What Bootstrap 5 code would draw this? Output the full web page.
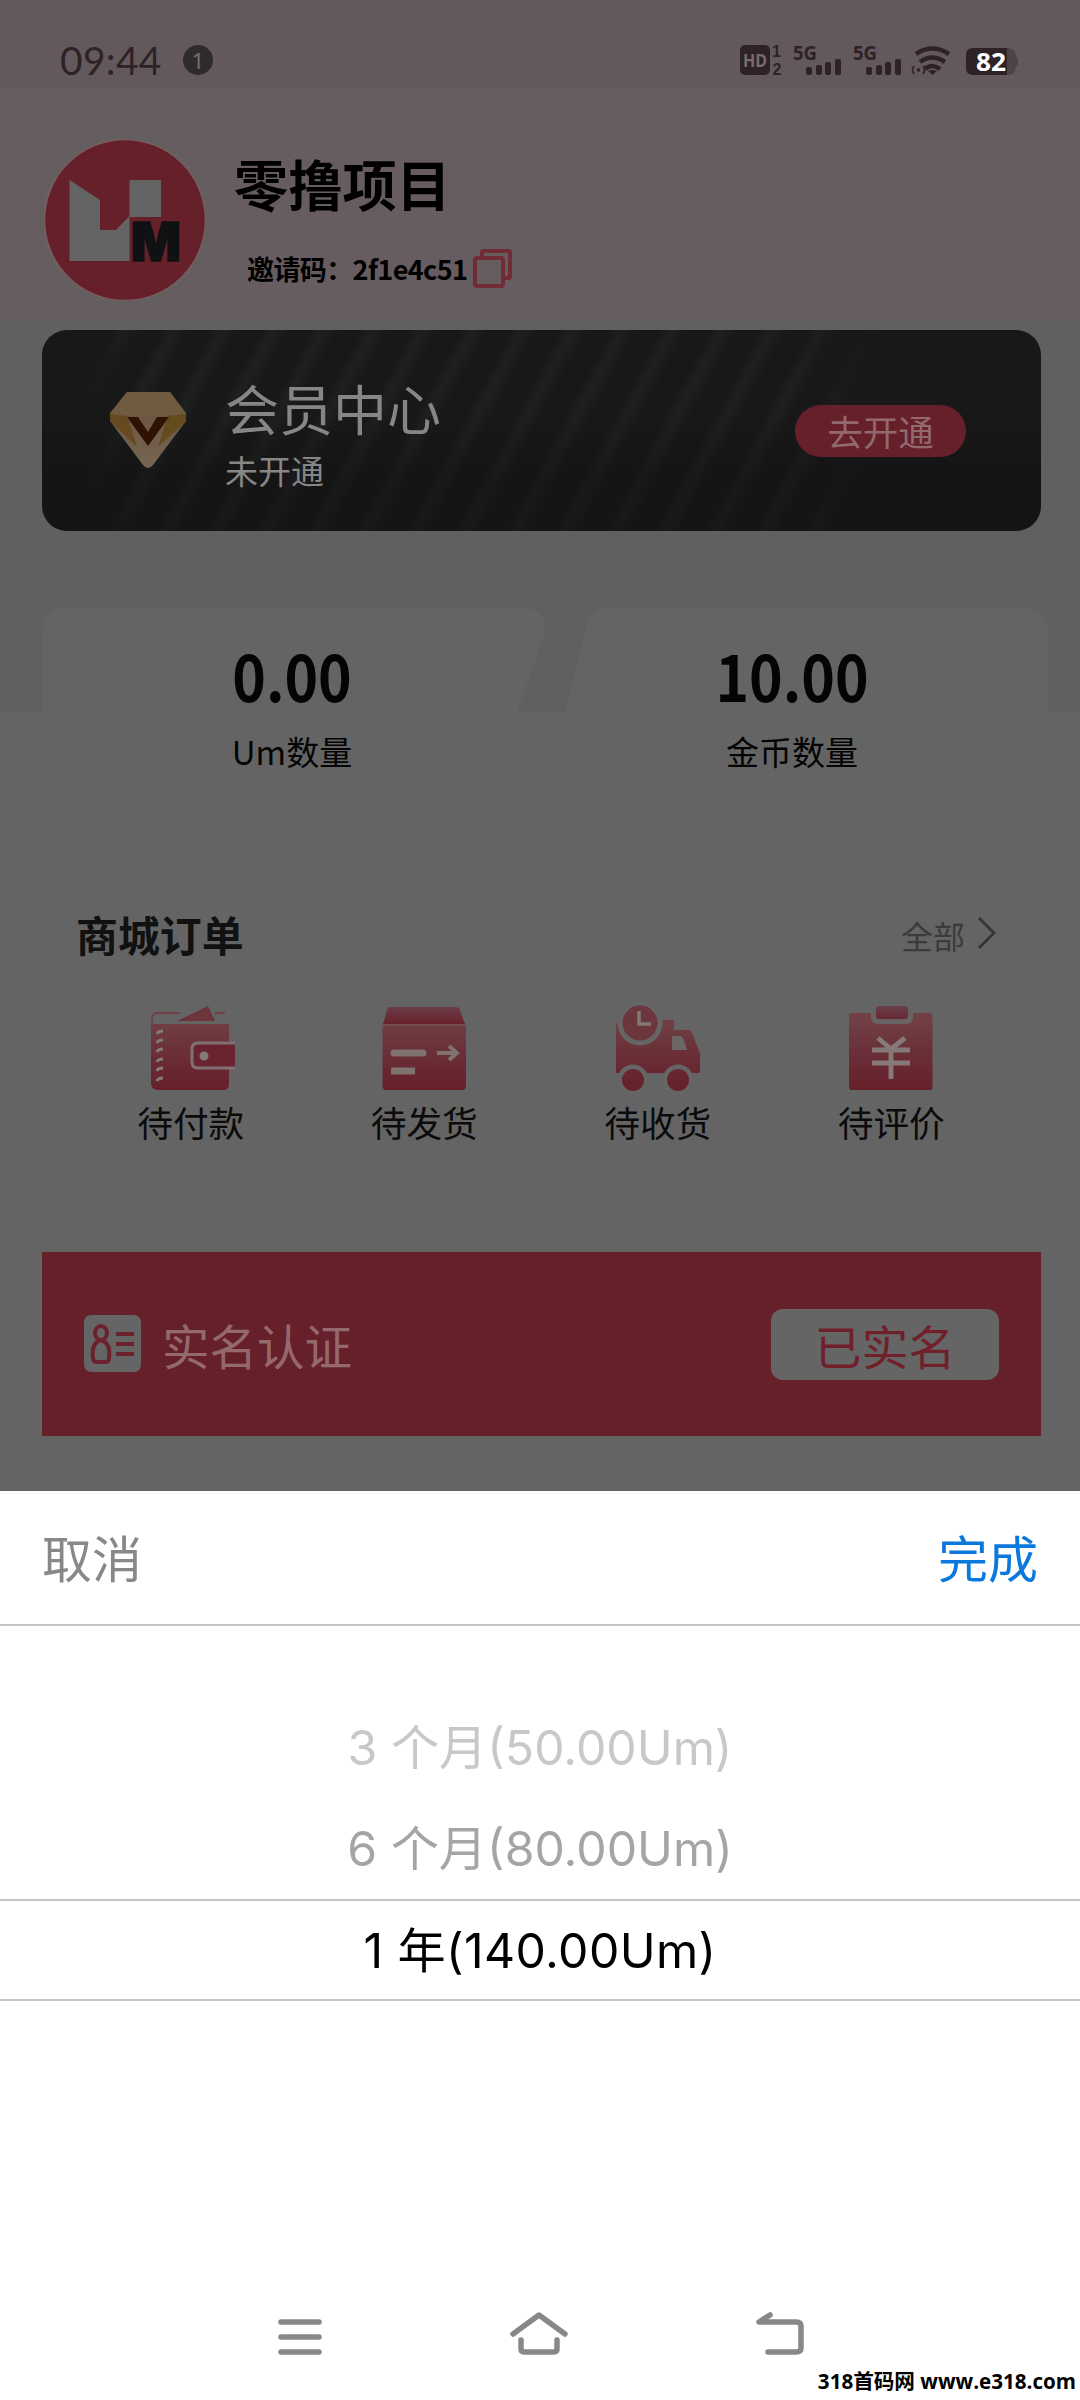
<!DOCTYPE html>
<html lang="zh-CN">
<head>
<meta charset="utf-8">
<meta name="viewport" content="width=1080">
<title>会员中心</title>
<link rel="stylesheet" href="https://cdn.jsdelivr.net/npm/bootstrap@5.3.0/dist/css/bootstrap.min.css">
<style>
body{margin:0;background:#fff;font-family:"Noto Sans CJK SC","Noto Sans",sans-serif}
svg{display:block;flex:none}
.phone{width:1080px;height:2400px;overflow:hidden;background:#fff}
.dimmed{height:1491px;background:linear-gradient(#606060 0 712px,#646464 712px)}
.status{height:88px;background:#63595d;padding:0 61px 0 60px;color:#2f2226}
.clock{font:39px/56px Lato,sans-serif;letter-spacing:.3px;padding-top:32px;width:123px}
.count{width:30px;height:30px;margin-top:45px;background:#2f2a2c;color:#766d70;font:22px/30px "Noto Sans",sans-serif}
.profile{height:232px;background:#675c60;padding:50px 43px 0}
.avatar{border-radius:50%;box-shadow:0 0 12px 3px #626060}
.nick{font-size:54.2px;line-height:60px;margin:15px 0 0 27px}
.invite{font-size:27px;line-height:40px;margin:36px 0 0 40px;height:40px}
.invite span{letter-spacing:-.6px;width:224px;white-space:nowrap}
.vip{height:201px;margin:10px 39px 0 42px;border-radius:25px;padding:0 75px 0 67px;color:#868686;
 background:linear-gradient(transparent 40%,rgba(14,14,14,.35) 72%),linear-gradient(90deg,#181818 0 4%,transparent 10% 75%,#181818 84%),repeating-linear-gradient(118deg,#181818 0 18px,#1e1f1f 27px 29px,#181818 42px 44px)}
.vip-name{font-size:54px;line-height:60px;margin-top:48px}
.vip-state{font-size:33px;line-height:40px;margin-top:12px}
.open-btn{width:171px;height:52px;border-radius:26px;background:#66202a;color:#92696e;font-size:35.5px;line-height:50px;margin-top:75px;padding:0;border:0}
.stats{height:170px;margin-top:77px;position:relative;color:#040404}
.stats>svg{position:absolute;left:0;top:0}
.stat{position:relative;text-align:center;width:500px}
.num{font-size:63px;line-height:76px;padding-top:29px;font-weight:700;transform:scaleX(.905)}
.cap{font-size:33px;line-height:40px;margin-top:18px}
.orders-head{height:60px;margin:125px 83px 0 76px;color:#111}
.orders-head b{font-size:41.9px;line-height:62px}
.all{font-size:32px;line-height:60px;color:#3b3b3b;padding-top:2px}
.orders{margin:37px 72px 0 74px;height:152px}
.order{font-size:35.7px;line-height:44px;color:#0b0b0b}
.realname{height:184px;margin:100px 39px 0 42px;background:#66202a;padding:0 42px 0 42px}
.realname .t{font-size:47.5px;line-height:60px;color:#94696e;margin-left:20px;padding-top:2px}
.done{width:228px;height:71px;border-radius:12px;background:#656565;color:#70202b;font-size:47px;line-height:71px}
.sheet-head{height:135px;border-bottom:2px solid #c6c6c6;padding:0 42px;font-size:50px}
.sheet-head a{text-decoration:none;line-height:131px;cursor:pointer}
.cancel{color:#888}.ok{color:#0a78dc}
.wheel{height:612px;padding-top:71px;font:48.2px Inter,"Noto Sans CJK SC",sans-serif;text-align:center}
.wheel div{height:101px;line-height:102px}
.w1{color:#c8c8c8}.w2{color:#a5a5a5}
.wheel .picked{height:102px;line-height:100px;color:#000;letter-spacing:.4px;border-top:2px solid #c6c6c6;border-bottom:2px solid #c6c6c6}
.keys{height:162px;position:relative;padding-top:68px;gap:188px;padding-left:278px}
.site{position:absolute;right:4px;top:126px;font:bold 20.6px/34px "Open Sans","Noto Sans CJK SC",sans-serif;color:#000;white-space:nowrap}
</style>
</head>
<body>
<div class="phone">
 <div class="dimmed">
  <div class="status d-flex">
   <div class="clock">09:44</div>
   <div class="count rounded-circle text-center">1</div>
   <svg class="ms-auto" width="280" height="88" viewBox="740 0 280 88" fill="#2f2226" font-family="Noto Sans, sans-serif" font-weight="700">
    <rect x="741" y="45" width="30" height="30" rx="5"/>
    <text x="744" y="67" font-size="18" textLength="24" lengthAdjust="spacingAndGlyphs" fill="#766b6f">HD</text>
    <g font-family="Liberation Sans, sans-serif" font-size="16"><text x="773" y="57">1</text><text x="773.500" y="75">2</text></g>
    <g id="sim"><text x="794" y="60" font-size="20" textLength="24" lengthAdjust="spacingAndGlyphs">5G</text>
    <rect x="807" y="67" width="6" height="8" rx="2"/><rect x="817" y="65" width="6" height="10" rx="2"/><rect x="826" y="62" width="6" height="13" rx="2"/><rect x="836" y="59" width="6" height="16" rx="2"/></g>
    <use href="#sim" x="60"/>
    <g fill="none" stroke="#2f2226" stroke-width="4.600"><path d="M917 54Q933 43 950 54M921 62Q933 53 946 62M926 69Q933 63 941 69"/><path stroke-width="1.600" d="M915 66q-3 4 0 8M924 66q3 4 0 8"/></g>
    <circle cx="919.500" cy="70" r="1.800"/><path d="M929 71q4-2 9 0l-4.500 4z"/>
    <path d="M1008 48h2q6 1 7 8l2 3v5l-2 3q-1 7-7 8h-4z" fill="#4b4346"/>
    <path d="M974 48h34v27h-34q-7 0-7-7V55q0-7 7-7z"/>
    <text x="977" y="71" font-size="25" textLength="30" lengthAdjust="spacingAndGlyphs" fill="#fff">82</text>
   </svg>
  </div>
  <div class="profile d-flex">
   <svg class="avatar" width="164" height="164" viewBox="43 138 164 164">
    <circle cx="125" cy="220" r="80.500" fill="#66202a" stroke="#765f62" stroke-width="1.500"/>
    <path d="M69.500 180L100 200v30h16l13.500-14v-36H161v37h-31.500v44h-60z" fill="#646464"/>
    <text x="131" y="261" font-family="Inter, sans-serif" font-weight="900" font-size="53" textLength="50" lengthAdjust="spacingAndGlyphs" fill="#101112" stroke="#101112" stroke-width="1.500">M</text>
   </svg>
   <div>
    <div class="nick fw-bold text-black">零撸项目</div>
    <div class="invite fw-bold text-black d-flex"><span>邀请码：2f1e4c51</span>
     <svg width="42" height="42" viewBox="470 249 42 42" fill="none" stroke="#702c35" stroke-width="4"><path d="M481 258v-6q0-1 1-1h26q1 0 1 1v25q0 1-1 1h-6"/><rect x="474" y="258" width="28" height="28" rx="2"/></svg>
    </div>
   </div>
  </div>
  <div class="vip d-flex">
   <svg width="78" height="78" viewBox="0 0 78 78" style="margin-top:61px">
    <defs><linearGradient id="gem" x2="0" y2="1"><stop stop-color="#675039"/><stop offset="1" stop-color="#766653"/></linearGradient></defs>
    <path d="M18 1h43l16 21v8L44 74q-5 6-10 0L1 30v-8z" fill="url(#gem)"/>
    <path d="M18 1L1 23l17 2h41l18-2L61 1z" fill="#6f5b3f"/><path d="M1 23l17 2 10 31L1 30z" fill="#66491f"/><path d="M77 23l-18 2-10 31 28-26z" fill="#644b1d"/>
    <path d="M18 26h11l10 15 9-15h12L39 55z" fill="#2e1203"/>
   </svg>
   <div style="margin-left:38px"><div class="vip-name">会员中心</div><div class="vip-state">未开通</div></div>
   <button class="open-btn ms-auto">去开通</button>
  </div>
  <div class="stats d-flex">
   <svg width="1080" height="110" fill="#646464"><path d="M42 104V30Q42 0 66 0H522Q550 0 543 30L517 104zM565 104L586 20Q591 0 610 0H1020Q1048 0 1048 28V104z"/></svg>
   <div class="stat" style="margin-left:42px"><div class="num">0.00</div><div class="cap">Um数量</div></div>
   <div class="stat"><div class="num">10.00</div><div class="cap">金币数量</div></div>
  </div>
  <div class="orders-head d-flex justify-content-between">
   <b>商城订单</b>
   <div class="all d-flex">全部<svg width="20" height="34" viewBox="0 0 20 34" fill="none" stroke="#343434" stroke-width="2.800" style="margin:11px 0 0 12px"><path d="M2 2l15 15L2 32"/></svg></div>
  </div>
  <svg width="0" height="0" class="position-absolute"><defs>
   <linearGradient id="red" gradientUnits="userSpaceOnUse" x1="0" y1="20" x2="0" y2="90"><stop stop-color="#704045"/><stop offset=".5" stop-color="#6a2e36"/><stop offset="1" stop-color="#66202a"/></linearGradient>
   <linearGradient id="cap" gradientUnits="userSpaceOnUse" x1="0" y1="5" x2="0" y2="24"><stop stop-color="#68404a"/><stop offset="1" stop-color="#69212c"/></linearGradient>
  </defs></svg>
  <div class="orders row g-0">
   <div class="order col d-flex flex-column align-items-center">
    <svg width="100" height="100" fill="url(#red)"><path d="M10 24h78v60q0 6-6 6H17q-7 0-7-7z"/><path d="M36 21L67 6l7 15z" fill="#6d343b"/><path d="M11 24v-5q0-6 6-6h22M74 13h10" fill="none" stroke="#733f45" stroke-width="1.800"/><path d="M94 43H57q-6 0-6 6v13q0 6 6 6h37" fill="#69242f" stroke="#817173" stroke-width="3"/><circle cx="63" cy="56" r="4.500" fill="#85797a"/><path d="M16 34q1-3 6-3M16 43q1-3 6-3M16 52q1-3 6-3M16 62q1-3 6-3M16 71q1-3 6-3M16 81q1-3 6-3" fill="none" stroke="#85797a" stroke-width="3"/></svg>
    <span>待付款</span></div>
   <div class="order col d-flex flex-column align-items-center">
    <svg width="100" height="100" fill="url(#red)"><path d="M17 7h65q3 0 4 3l5 14H9l4-14q1-3 4-3z" fill="url(#cap)"/><path d="M8.500 24H92v62q0 4-4 4H12q-3.500 0-3.500-4z"/><path d="M8 25h84" stroke="#805d60"/><g fill="none" stroke="#80736f" stroke-width="7"><path d="M20 53h29" stroke-linecap="round"/><path d="M17 71h24"/><path d="M63 53h20M75 46l8 7-8 7" stroke-width="3.800"/></g></svg>
    <span>待发货</span></div>
   <div class="order col d-flex flex-column align-items-center">
    <svg width="100" height="100" fill="url(#red)"><path d="M8 23h38V20h20v10h14q3 0 4 3l8 20v18q0 2-3 2H8z"/><circle cx="32" cy="23" r="22.500" fill="#666565"/><circle cx="32" cy="23" r="17.500" fill="#6c363d"/><path d="M31 11v13h12" fill="none" stroke="#817775" stroke-width="3.500"/><path d="M64 36h9q2 0 6 14H64z" fill="#6b6766"/><g fill="#666565"><circle cx="25" cy="80" r="15.500"/><circle cx="70" cy="80" r="15.500"/></g><circle cx="25" cy="80" r="11"/><circle cx="70" cy="80" r="11"/></svg>
    <span>待收货</span></div>
   <div class="order col d-flex flex-column align-items-center">
    <svg width="100" height="100" fill="url(#red)"><path d="M11 13h78q2.500 0 2.500 3v71q0 3-3 3H11q-3 0-3-3V16q0-3 3-3z"/><path d="M30 12h42v5q0 7-7 7H37q-7 0-7-7z" fill="#686464"/><rect x="35" y="6" width="32" height="13" rx="3" fill="url(#cap)"/><path d="M37 38l13 11 14-11M50 48v31M31 50h38M31 63h38" fill="none" stroke="#85797a" stroke-width="4.800"/></svg>
    <span>待评价</span></div>
  </div>
  <div class="realname d-flex align-items-center">
   <svg width="58" height="58" fill="none" stroke="#6b222d" stroke-width="4"><rect width="57" height="57" rx="7" fill="#656565" stroke="none"/><ellipse cx="17" cy="18" rx="6" ry="7"/><path d="M9 43q-2-15 8-18 10 3 8 18 0 4-4 4h-8q-4 0-4-4zM32 19h18M32 29h18M32 39h18"/></svg>
   <div class="t">实名认证</div>
   <div class="done text-center ms-auto">已实名</div>
  </div>
 </div>
 <div class="sheet-head d-flex justify-content-between"><a class="cancel">取消</a><a class="ok">完成</a></div>
 <div class="wheel"><div class="w1">3 个月(50.00Um)</div><div class="w2">6 个月(80.00Um)</div><div class="picked">1 年(140.00Um)</div></div>
 <div class="keys d-flex">
  <svg width="44" height="56" viewBox="278 2306 44 56" stroke="#888" stroke-width="5.500" stroke-linecap="round"><path d="M281 2322h38M281 2337h38M281 2352h38"/></svg>
  <svg width="58" height="56" viewBox="511 2306 58 56" fill="none" stroke="#888" stroke-width="5.500" stroke-linecap="round" stroke-linejoin="round"><path d="M514 2334l26-19 26 19M522 2340v9q0 3 4 3h28q4 0 4-3v-9"/></svg>
  <svg width="50" height="56" viewBox="755 2306 50 56" fill="none" stroke="#888" stroke-width="5.500" stroke-linecap="round" stroke-linejoin="round" style="margin-left:-1px"><path d="M770 2315l-11 7h37q5 0 5 4v22q0 4-5 4h-28"/></svg>
  <div class="site">318首码网 www.e318.com</div>
 </div>
</div>
<script src="https://cdn.jsdelivr.net/npm/bootstrap@5.3.0/dist/js/bootstrap.bundle.min.js"></script>
</body>
</html>
